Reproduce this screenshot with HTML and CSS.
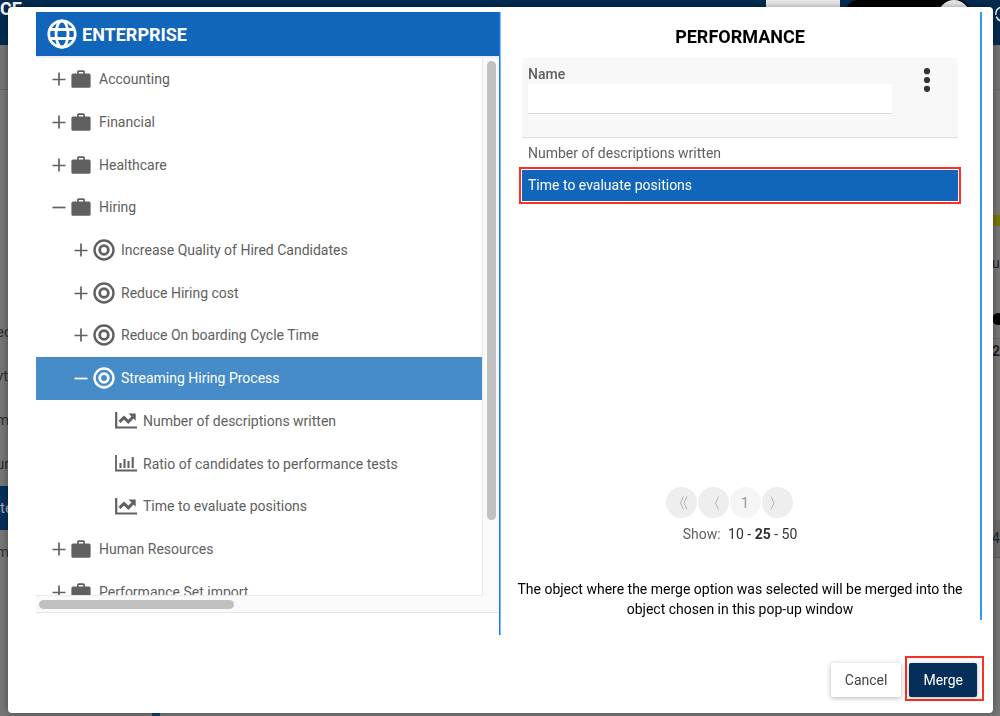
FILE: index.html
```html
<!DOCTYPE html>
<html lang="en">
<head>
  <meta charset="utf-8">
  <title>Merge object</title>
  <link rel="stylesheet" href="styles.css">
</head>
<body>
  <svg class="sprite" aria-hidden="true">
    <symbol id="plus" viewBox="0 0 14 14"><path d="M7 0.5v13M0.5 7.500h13" stroke="currentColor" stroke-width="1.700"/></symbol>
    <symbol id="minus" viewBox="0 0 14 14"><path d="M0.5 7.500h13" stroke="currentColor" stroke-width="1.700"/></symbol>
    <symbol id="briefcase" viewBox="0 0 20 18"><path fill="currentColor" d="M6 3.5V2a1.7 1.7 0 0 1 1.7-1.7h4.6A1.7 1.7 0 0 1 14 2v1.5h4a1.6 1.6 0 0 1 1.6 1.6v11.1a1.6 1.6 0 0 1-1.6 1.6H2a1.6 1.6 0 0 1-1.6-1.6V5.1A1.6 1.6 0 0 1 2 3.500zM7.700 3.500h4.600V2H7.700z"/></symbol>
    <symbol id="target" viewBox="0 0 22 22"><g fill="none" stroke="currentColor"><circle cx="11" cy="11" r="9.500" stroke-width="2.400"/><circle cx="11" cy="11" r="4.300" stroke-width="2.800"/></g></symbol>
    <symbol id="line-chart" viewBox="0 0 22 17"><path d="M1.200 0v15.500H22" fill="none" stroke="currentColor" stroke-width="2.200"/><path d="M4.500 9.800L9 5.500l4.300 4.300L18 5" fill="none" stroke="currentColor" stroke-width="3"/><path d="M13.500 1.500h7.200v7.200z" fill="currentColor"/></symbol>
    <symbol id="bar-chart" viewBox="0 0 22 17"><path d="M1 0v15.500h21" fill="none" stroke="currentColor" stroke-width="1.800"/><path d="M5.500 8v5M9.500 4v9M13.500 6v7M17.700 2v11" stroke="currentColor" stroke-width="2.100"/></symbol>
  </svg>

  <div class="page">
    <header class="topbar">
      <span class="brand">CE</span>
      <span class="tile"></span>
      <span class="switch"><span class="knob"></span></span>
      <svg class="history" viewBox="0 0 20 20" fill="none" stroke="currentColor" stroke-width="1.600"><circle cx="10" cy="10" r="8" stroke-dasharray="10 2"/><path d="M10 5v5l3 2"/></svg>
    </header>
    <div class="columns">
      <nav class="side">
        <a href="#">ec</a>
        <a href="#">vt</a>
        <a href="#">m</a>
        <a href="#">ur</a>
        <a href="#" class="current">te</a>
        <a href="#">m</a>
      </nav>
      <div class="content"></div>
      <aside class="stats">
        <span class="swatch"></span>
        <span class="unit">u</span>
        <span class="dot"></span>
        <b class="count">2</b>
        <span class="total">4</span>
      </aside>
    </div>
  </div>

  <div class="dialog" role="dialog" aria-label="Merge">
    <div class="panes">
      <section class="pane enterprise">
        <h2 class="enterprise-title">
          <svg class="globe" viewBox="0 0 30 30" fill="none" stroke="currentColor" stroke-width="2.800"><circle cx="15" cy="15" r="13.200"/><ellipse cx="15" cy="15" rx="6" ry="13.200"/><path d="M3 10.500h24M3 19.500h24"/></svg>
          ENTERPRISE
        </h2>
        <div class="tree-box">
          <div class="tree-view">
            <ul class="tree">
              <li><svg class="toggle"><use href="#plus"/></svg><svg class="case"><use href="#briefcase"/></svg>Accounting</li>
              <li><svg class="toggle"><use href="#plus"/></svg><svg class="case"><use href="#briefcase"/></svg>Financial</li>
              <li><svg class="toggle"><use href="#plus"/></svg><svg class="case"><use href="#briefcase"/></svg>Healthcare</li>
              <li><svg class="toggle"><use href="#minus"/></svg><svg class="case"><use href="#briefcase"/></svg>Hiring</li>
              <li class="level-2"><svg class="toggle"><use href="#plus"/></svg><svg class="goal"><use href="#target"/></svg>Increase Quality of Hired Candidates</li>
              <li class="level-2"><svg class="toggle"><use href="#plus"/></svg><svg class="goal"><use href="#target"/></svg>Reduce Hiring cost</li>
              <li class="level-2"><svg class="toggle"><use href="#plus"/></svg><svg class="goal"><use href="#target"/></svg>Reduce On boarding Cycle Time</li>
              <li class="level-2 selected"><svg class="toggle"><use href="#minus"/></svg><svg class="goal"><use href="#target"/></svg>Streaming Hiring Process</li>
              <li class="level-3"><svg class="chart"><use href="#line-chart"/></svg>Number of descriptions written</li>
              <li class="level-3"><svg class="chart"><use href="#bar-chart"/></svg>Ratio of candidates to performance tests</li>
              <li class="level-3"><svg class="chart"><use href="#line-chart"/></svg>Time to evaluate positions</li>
              <li><svg class="toggle"><use href="#plus"/></svg><svg class="case"><use href="#briefcase"/></svg>Human Resources</li>
              <li><svg class="toggle"><use href="#plus"/></svg><svg class="case"><use href="#briefcase"/></svg>Performance Set import</li>
            </ul>
          </div>
          <div class="track-y"><div class="thumb-y"></div></div>
          <div class="track-x"><div class="thumb-x"></div></div>
        </div>
      </section>

      <section class="pane performance">
        <h2 class="performance-title">PERFORMANCE</h2>
        <div class="grid">
          <div class="filter">
            <div class="field">
              <label for="name">Name</label>
              <input id="name" type="text">
            </div>
            <button class="more" aria-label="More options">
              <svg viewBox="0 0 8 24" fill="currentColor"><circle cx="4" cy="3.200" r="3.100"/><circle cx="4" cy="12" r="3.100"/><circle cx="4" cy="20.800" r="3.100"/></svg>
            </button>
          </div>
          <ul class="results">
            <li>Number of descriptions written</li>
            <li class="picked">Time to evaluate positions</li>
          </ul>
        </div>
        <div class="pager">
          <button aria-label="First page"><svg viewBox="0 0 16 16"><path d="M10.500 1.500L7.500 8l3 6.500M14 1.500L11 8l3 6.500"/></svg></button>
          <button aria-label="Previous page"><svg viewBox="0 0 16 16"><path d="M13.500 1.500L10.500 8l3 6.500"/></svg></button>
          <button class="page-number">1</button>
          <button aria-label="Next page"><svg viewBox="0 0 16 16"><path d="M2 1.500L5 8l-3 6.500"/></svg></button>
        </div>
        <p class="show">Show: <span class="sizes"><a href="#">10</a> - <a href="#"><b>25</b></a> - <a href="#">50</a></span></p>
        <p class="note">The object where the merge option was selected will be merged into the object chosen in this pop-up window</p>
      </section>
    </div>

    <footer class="actions">
      <button class="btn">Cancel</button>
      <div class="highlight"><button class="btn primary">Merge</button></div>
    </footer>
  </div>
</body>
</html>
```

FILE: styles.css
```css
* {
  box-sizing: border-box;
}

body {
  margin: 0;
  height: 100vh;
  overflow: hidden;
  font-family: Roboto, "Liberation Sans", sans-serif;
  font-size: 14px;
  color: #606060;
}

h2, p, ul {
  margin: 0;
  padding: 0;
}

ul {
  list-style: none;
}

a {
  color: inherit;
  text-decoration: none;
}

button {
  font: inherit;
  border: 0;
  padding: 0;
}

svg {
  display: block;
  flex: none;
}

.sprite {
  position: absolute;
  width: 0;
  height: 0;
}

/* page behind the dialog */
.page {
  display: flex;
  flex-direction: column;
  height: 100vh;
  background: #7b7b7b;
}

.topbar {
  display: flex;
  height: 45px;
  background: #032c52;
  color: #fff;
}

.brand {
  flex: 1;
  font-size: 18px;
  font-weight: 700;
  line-height: 18px;
}

.tile {
  width: 74px;
  height: 20px;
  background: #eee;
}

.switch {
  display: flex;
  justify-content: flex-end;
  width: 124px;
  height: 20px;
  margin: 0 24px 0 6px;
  border-radius: 12px 12px 0 0;
  background: #000;
}

.knob {
  width: 32px;
  height: 32px;
  border-radius: 50%;
  background: #eee;
}

.history {
  width: 18px;
  height: 18px;
  margin: 5px -12px 0 0;
}

.columns {
  flex: 1;
  display: flex;
}

.side {
  width: 160px;
  padding-top: 265px;
  border-right: 8px solid #123e6d;
  background: linear-gradient(#757575 44px, #696969 44px, #696969 45px, #777 45px);
}

.side a {
  display: block;
  height: 44px;
  font-size: 15px;
  line-height: 44px;
  text-indent: -4px;
  color: #303030;
}

.side .current {
  background: #06305f;
  color: #aaa;
  text-indent: 0;
}

.content {
  flex: 1;
}

.stats {
  display: flex;
  flex-direction: column;
  width: 8px;
  background: linear-gradient(#757575 44px, #696969 44px, #696969 45px, #777 45px);
  color: #222;
}

.swatch {
  height: 11px;
  margin-top: 170px;
  background: #77770a;
}

.unit {
  line-height: 74px;
}

.dot {
  width: 12px;
  height: 12px;
  margin: 13px 0;
  border-radius: 50%;
  background: #000;
}

.count {
  padding: 4px 0;
  border-top: 1px solid #666;
}

.total {
  height: 38px;
  margin-top: 157px;
  border-bottom: 1px solid #5c5c5c;
  background: #6c6c6c;
  line-height: 37px;
}

/* dialog */
.dialog {
  position: fixed;
  top: 7px;
  right: 7px;
  bottom: 3px;
  left: 8px;
  display: flex;
  flex-direction: column;
  padding: 5px 11px 12px 28px;
  border-radius: 4px;
  background: #fff;
  box-shadow: 0 0 8px rgba(0, 0, 0, 0.4);
}

.panes {
  flex: 1;
  display: grid;
  grid-template-columns: 464fr 482fr;
  align-items: start;
}

.enterprise {
  min-width: 0;
  height: 623px;
  border-right: 1px solid #1b76e6;
  box-shadow: 1px 0 #80bbf8;
}

.enterprise-title {
  display: flex;
  align-items: center;
  gap: 5px;
  height: 44px;
  padding-left: 11px;
  background: #1165ba;
  color: #fff;
  font-size: 18px;
  font-weight: 700;
}

.globe {
  width: 30px;
  height: 30px;
}

.tree-box {
  display: grid;
  grid-template-columns: 1fr 17px;
  grid-template-rows: 538px 16px;
  border-top: 2px solid #eee;
  border-bottom: 1px solid #e6e6e6;
  background: #fafafa;
}

.tree-view {
  overflow: hidden;
  border-bottom: 1px solid #eaeaea;
  background: #fff;
}

.tree {
  display: grid;
  grid-auto-rows: 1fr;
  height: 555px;
}

.tree li {
  display: flex;
  align-items: center;
  padding-left: 16px;
  white-space: nowrap;
}

.tree .level-2 {
  padding-left: 38px;
}

.tree .level-3 {
  padding-left: 79px;
}

.tree .selected {
  background: #458cc9;
  color: #fff;
}

.toggle {
  width: 14px;
  height: 14px;
  margin-right: 5px;
}

.case {
  width: 20px;
  height: 18px;
  margin-right: 8px;
}

.goal {
  width: 22px;
  height: 22px;
  margin-right: 6px;
}

.chart {
  width: 22px;
  height: 17px;
  margin-right: 6px;
}

.track-y {
  padding: 3px 3px 0 4px;
  border-left: 1px solid #eaeaea;
}

.thumb-y {
  height: 459px;
  border-radius: 5px;
  background: #c1c1c1;
}

.track-x {
  grid-column: 1 / -1;
  padding: 4px 3px;
}

.thumb-x {
  width: 195px;
  height: 9px;
  border-radius: 5px;
  background: #c1c1c1;
}

.performance {
  display: flex;
  flex-direction: column;
  height: 608px;
  padding: 0 22px;
  border-right: 2px solid #3695fb;
}

.performance-title {
  padding: 14px 0 10px;
  color: #000;
  font-size: 18px;
  font-weight: 700;
  line-height: 22px;
  text-align: center;
}

.grid {
  flex: 1;
}

.filter {
  display: flex;
  align-items: flex-start;
  height: 80px;
  padding: 6px;
  border-bottom: 1px solid #ddd;
  background: #f8f8f8;
}

.field {
  flex: 1;
}

.field label {
  display: block;
  font-weight: 500;
  line-height: 20px;
}

.field input {
  display: block;
  width: 100%;
  height: 30px;
  border: 0;
  border-bottom: 1px solid #ddd;
  background: #fff;
  font: inherit;
}

.more {
  width: 60px;
  padding: 4px 0 0 31px;
  background: none;
  color: #333;
}

.more svg {
  width: 8px;
  height: 24px;
}

.results li {
  height: 32px;
  padding-left: 6px;
  line-height: 31px;
}

.results .picked {
  height: 31px;
  background: #1165ba;
  color: #fff;
  outline: 2px solid #fb3024;
  outline-offset: 1px;
}

.pager {
  display: flex;
  justify-content: center;
  gap: 1px;
  padding-right: 22px;
}

.pager button {
  display: flex;
  align-items: center;
  justify-content: center;
  width: 31px;
  height: 31px;
  border-radius: 50%;
  background: #eee;
  color: #999;
}

.pager .page-number {
  background: #f5f5f5;
}

.pager svg {
  width: 16px;
  height: 16px;
  fill: none;
  stroke: #b5b5b5;
}

.show {
  padding-top: 6px;
  line-height: 20px;
  text-align: center;
}

.sizes {
  margin-left: 4px;
  color: #333;
}

.note {
  margin: 35px -16px 1px;
  color: #000;
  line-height: 20px;
  text-align: center;
}

.actions {
  display: flex;
  align-items: flex-start;
  justify-content: flex-end;
  gap: 4px;
  margin-right: -2px;
}

.btn {
  height: 34px;
  padding: 0 14px;
  border-radius: 2px;
  background: #fff;
  box-shadow: 0 1px 5px rgba(0, 0, 0, 0.3);
  color: #444;
}

.actions > .btn {
  margin-top: 7px;
}

.highlight {
  padding: 5px 5px 2px 2px;
  border: 2px solid #fb3024;
}

.primary {
  background: #052f59;
  color: #fff;
}
```
